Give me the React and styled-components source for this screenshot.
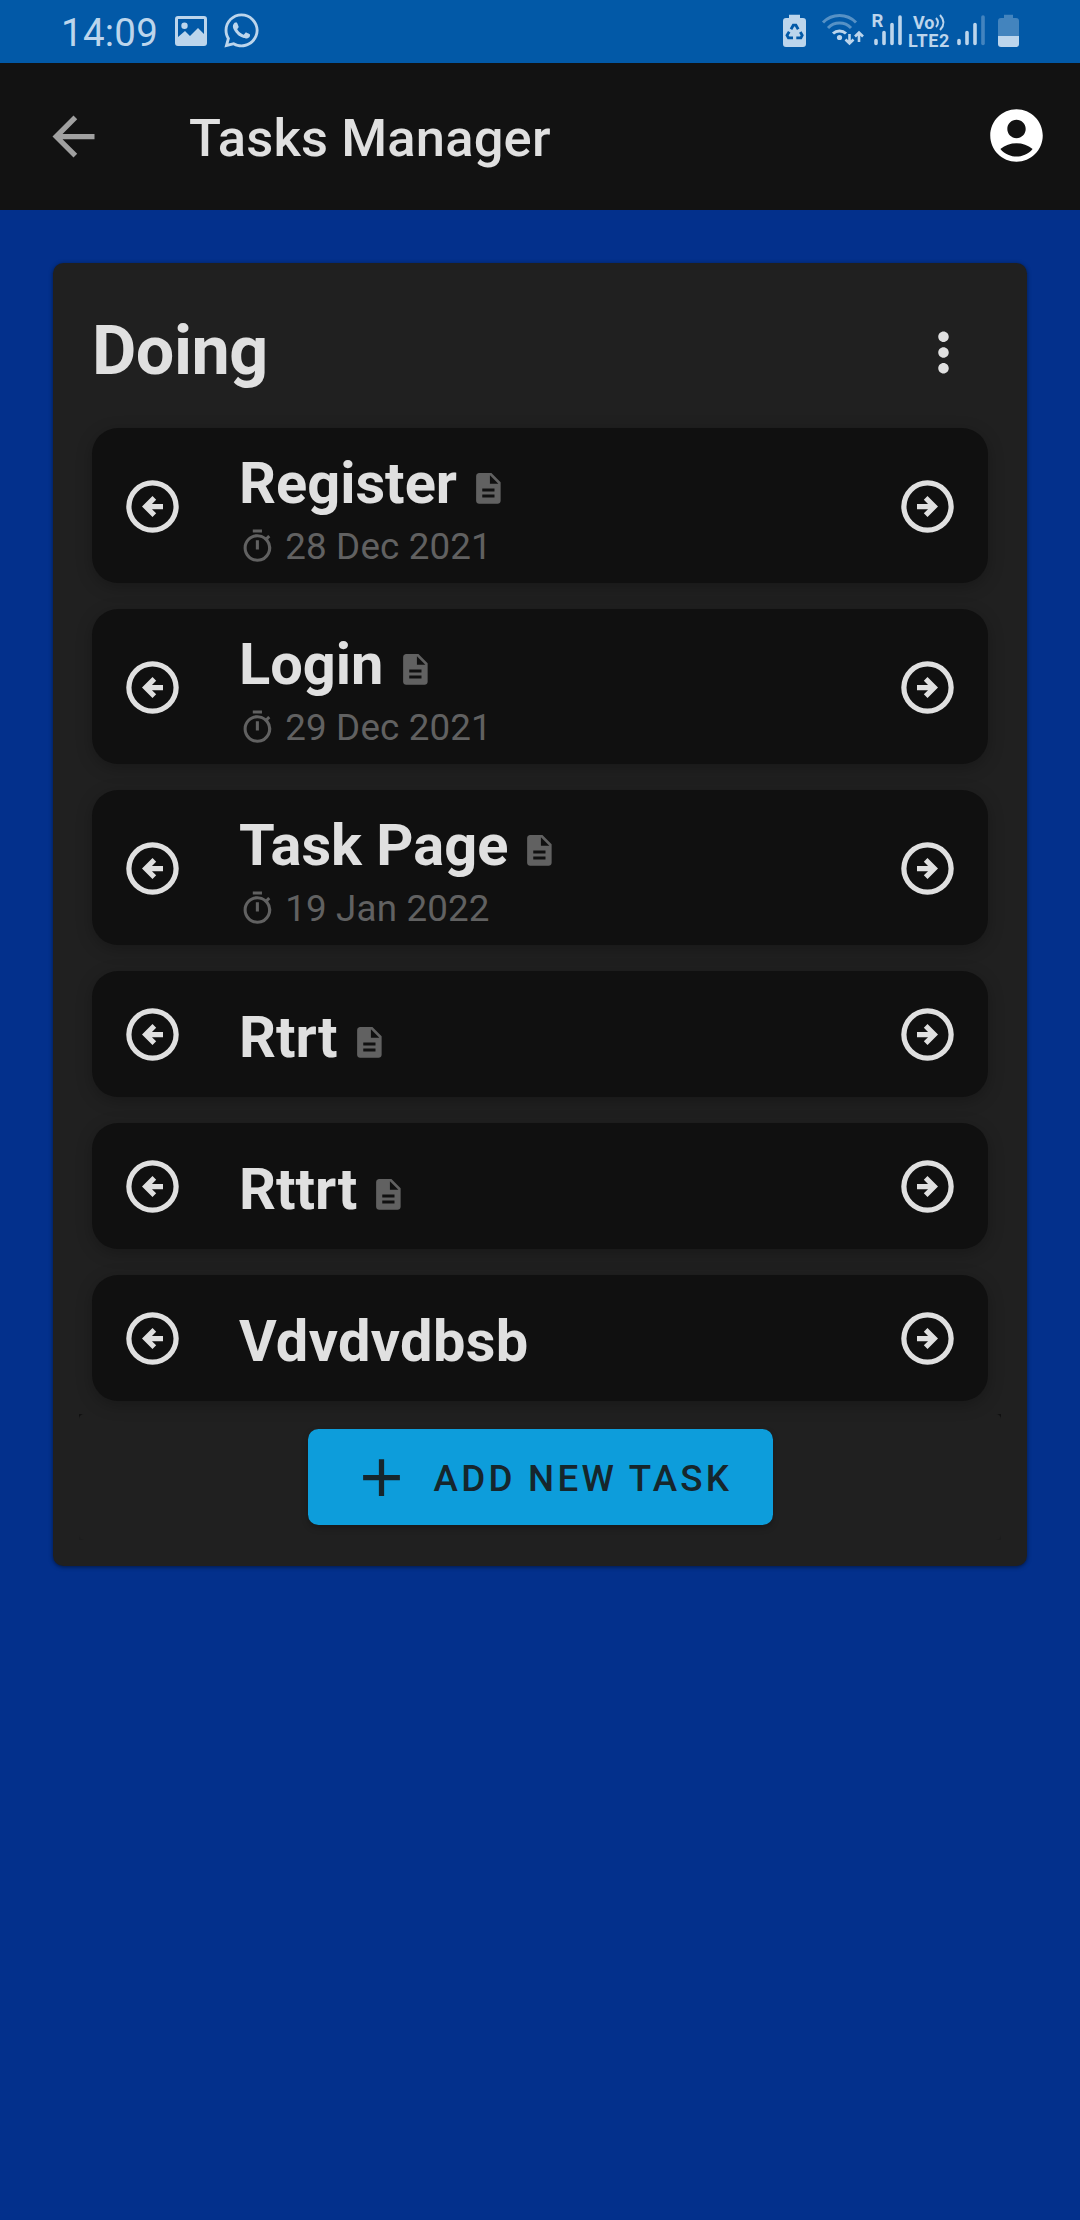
import React from "react";
import styled, { createGlobalStyle } from "styled-components";
import { MdDescription, MdOutlineTimer, MdAccountCircle, MdArrowBack, MdMoreVert, MdAdd } from "react-icons/md";
import { FaWhatsapp } from "react-icons/fa";

const GlobalStyle = createGlobalStyle`
  * { box-sizing: border-box; }
  body { margin: 0; background: #03308c; font-family: Roboto, sans-serif; }
`;

const Screen = styled.div`
  width: 1080px;
  height: 2220px;
  background: #03308c;
  overflow: hidden;
`;

const StatusBar = styled.header`
  display: flex;
  justify-content: space-between;
  height: 63px;
  padding: 0 61px 0 61px;
  background: #0259a7;
  color: #bcd5ec;
`;

const StatusGroup = styled.div`
  display: flex;
  align-items: flex-start;
`;

const Clock = styled.span`
  width: 114px;
  padding-top: 10px;
  font-size: 38.5px;
  line-height: 45px;
  letter-spacing: 0.25px;
`;

const StatusIcon = styled.svg`
  display: block;
  flex: none;
  width: ${(p) => p.$w}px;
  height: ${(p) => p.$h || 34}px;
  margin-left: ${(p) => p.$ml || 0}px;
  margin-top: ${(p) => p.$mt ?? 14}px;
  overflow: visible;
`;

const Network = styled.div`
  width: 41px;
  margin: 14px 0 0 6.5px;
  font-size: 18px;
  font-weight: 700;
  line-height: 17.5px;
  white-space: nowrap;
`;

const NetworkTop = styled.div`
  display: flex;
  height: 17.5px;
  padding-left: 5px;
`;

const NetworkBottom = styled.div`
  height: 17.5px;
  letter-spacing: 0.7px;
`;

const AppBar = styled.nav`
  display: flex;
  align-items: center;
  height: 147px;
  padding: 0 32px 0 42px;
  background: #121212;
`;

const BarTitle = styled.h1`
  flex: 1;
  margin: 2px 0 0 84px;
  color: #e0e0e0;
  font-size: 52.5px;
  font-weight: 500;
  line-height: 62px;
  letter-spacing: 0.16px;
`;

const AccountIcon = styled(MdAccountCircle)`
  width: 63px;
  height: 63px;
  margin-bottom: 2px;
  color: #fff;
`;

const Board = styled.main`
  padding: 53px;
`;

const Column = styled.section`
  height: 1303px;
  padding: 49px 26px 0;
  border-radius: 10.5px;
  background: #202020;
  box-shadow: 0 1px 4px rgba(0, 0, 0, 0.5);
`;

const ColumnHeader = styled.div`
  display: flex;
  justify-content: space-between;
  align-items: center;
  height: 80px;
  padding: 0 26px 0 13px;
`;

const ColumnTitle = styled.h2`
  margin: 0;
  padding-bottom: 2px;
  color: #e0e0e0;
  font-size: 68.25px;
  font-weight: 700;
  line-height: 80px;
  letter-spacing: -0.5px;
`;

const TaskList = styled.div`
  display: flex;
  flex-direction: column;
  gap: 26px;
  height: 1022px;
  padding: 36px 13px 0;
`;

const Task = styled.article`
  display: flex;
  align-items: center;
  flex: none;
  height: ${(p) => (p.$dated ? 155 : 126)}px;
  padding: 0 29px;
  border-radius: 26px;
  background: #101010;
  box-shadow: 0 4px 16px rgba(0, 0, 0, 0.25);
`;

const TaskBody = styled.div`
  flex: 1;
  margin-left: 55px;
  padding-top: ${(p) => (p.$dated ? 5 : 6)}px;
`;

const TaskTitle = styled.div`
  display: flex;
  align-items: flex-end;
  gap: 13px;
  height: 68px;
  color: #e0e0e0;
  font-size: 57.75px;
  font-weight: 700;
  line-height: 68px;
  letter-spacing: ${(p) => p.$tracking || 0}px;

  svg { color: #616161; margin-bottom: 10px; }
`;

const TaskDate = styled.div`
  display: flex;
  align-items: center;
  gap: 9.5px;
  height: 43px;
  margin-top: 8px;
  color: #616161;
  font-size: 36.75px;
  line-height: 43px;
  letter-spacing: 0.15px;
`;

const Footer = styled.div`
  height: 126px;
  background: linear-gradient(#101010, #1d1d1d);
`;

const FooterSurface = styled.div`
  display: flex;
  justify-content: center;
  height: 126px;
  padding-top: 15px;
  border-radius: 5px;
  background: #202020;
`;

const AddButton = styled.button`
  display: flex;
  align-items: center;
  gap: 21px;
  width: 465px;
  height: 96px;
  padding: 0 0 0 42px;
  border: 0;
  border-radius: 10.5px;
  background: #0d9ddb;
  box-shadow: 0 3px 6px rgba(0, 0, 0, 0.25);
  color: #16262c;
  font-family: inherit;
  font-size: 36.75px;
  font-weight: 500;
  letter-spacing: 3.28px;
  white-space: nowrap;
`;

const AddLabel = styled.span`
  padding-top: 2px;
`;

const ArrowSvg = styled.svg`
  flex: none;
  width: 63px;
  height: 63px;
  margin-top: 1px;
  fill: #e0e0e0;
  transform: ${(p) => (p.$right ? "scaleX(-1)" : "none")};
`;

const CircleArrow = ({ right }) => (
  <ArrowSvg viewBox="0 0 24 24" $right={right}>
    <path fillRule="evenodd" d="M12 2a10 10 0 1 0 0 20 10 10 0 0 0 0-20zm0 2a8 8 0 1 1 0 16 8 8 0 0 1 0-16z" />
    <path d="M16 11h-4.200l1.600-1.600L12 8l-4 4 4 4 1.400-1.400-1.600-1.600H16z" />
  </ArrowSvg>
);

const tasks = [
  { title: "Register", date: "28 Dec 2021", note: true },
  { title: "Login", date: "29 Dec 2021", note: true },
  { title: "Task Page", date: "19 Jan 2022", note: true },
  { title: "Rtrt", note: true },
  { title: "Rttrt", note: true },
  { title: "Vdvdvdbsb", tracking: 0.35 },
];

const SignalBars = ({ roaming, dim }) => (
  <StatusIcon $w={28} $h={34} $ml={roaming ? 9 : 8} viewBox="0 0 28 34">
    {roaming && (
      <text x="-2.5" y="13" fontSize="18.5" fontWeight="700" fill="currentColor">R</text>
    )}
    <g stroke="currentColor" strokeWidth="3.6" strokeLinecap="round">
      <path d="M2 26.500v3M10 18.500v11M18 10.500v19" />
      <path d="M26 3v26.500" opacity={dim ? 0.35 : 1} />
    </g>
  </StatusIcon>
);

export default function App() {
  return (
    <Screen>
      <GlobalStyle />
      <StatusBar>
        <StatusGroup>
          <Clock>14:09</Clock>
          <StatusIcon $w={32} $h={30} $mt={15.5} viewBox="0 0 32 30" fill="currentColor">
            <path fillRule="evenodd" d="M3 0h26a3 3 0 0 1 3 3v24a3 3 0 0 1-3 3H3a3 3 0 0 1-3-3V3a3 3 0 0 1 3-3zm0 3v18l7-6 5 5 8-8 6 6V3zM9.500 6.500a3.200 3.200 0 1 1 0 6.400 3.200 3.200 0 0 1 0-6.400z" />
          </StatusIcon>
          <StatusIcon as={FaWhatsapp} $w={39} $h={39} $ml={15} $mt={11} />
        </StatusGroup>
        <StatusGroup>
          <StatusIcon $w={23} $h={33} viewBox="0 0 23 33" fill="currentColor">
            <path d="M6 4V.7h11V4h3a3 3 0 0 1 3 3v23a3 3 0 0 1-3 3H3a3 3 0 0 1-3-3V7a3 3 0 0 1 3-3z" />
            <g fill="none" stroke="#0259a7" strokeWidth="2.8">
              <path d="M8 15.300 10.300 11.200h2.600l2.300 4.100M17.300 18l1.900 3.300-1.300 2.500H13.300M10 23.800H5.400l-1.400-2.500 2.200-3.600" />
            </g>
          </StatusIcon>
          <StatusIcon $w={43} $h={34} $ml={16} viewBox="0 0 43 34">
            <g fill="none" stroke="currentColor" strokeWidth="3">
              <path d="M1 8.500a23 23 0 0 1 33 0M6 14a16 16 0 0 1 23 0" opacity=".45" />
              <path d="M11 19.500a9.500 9.500 0 0 1 13 0" />
              <path d="M27.500 20v9M23.500 25.500l4 4 4-4M37 28v-9M33 22.500l4-4 4 4" strokeWidth="2.6" />
            </g>
            <circle cx="17.5" cy="23.500" r="2.6" fill="currentColor" />
          </StatusIcon>
          <SignalBars roaming />
          <Network>
            <NetworkTop>
              Vo
              <StatusIcon $w={10} $h={17} $mt={0} viewBox="0 0 10 17" fill="none" stroke="currentColor" strokeWidth="2">
                <path d="M1 4q4 4.500 0 9M5 1q7 7.500 0 15" />
              </StatusIcon>
            </NetworkTop>
            <NetworkBottom>LTE2</NetworkBottom>
          </Network>
          <SignalBars dim />
          <StatusIcon $w={21} $h={33} $ml={13} viewBox="0 0 21 33" fill="currentColor">
            <path d="M6 4V.7h9V4h3a3 3 0 0 1 3 3v15H0V7a3 3 0 0 1 3-3z" opacity=".35" />
            <path d="M0 22h21v8a3 3 0 0 1-3 3H3a3 3 0 0 1-3-3z" />
          </StatusIcon>
        </StatusGroup>
      </StatusBar>

      <AppBar>
        <MdArrowBack size={63} color="#a0a0a0" />
        <BarTitle>Tasks Manager</BarTitle>
        <AccountIcon />
      </AppBar>

      <Board>
        <Column>
          <ColumnHeader>
            <ColumnTitle>Doing</ColumnTitle>
            <MdMoreVert size={63} color="#e0e0e0" />
          </ColumnHeader>
          <TaskList>
            {tasks.map((t) => (
              <Task key={t.title} $dated={!!t.date}>
                <CircleArrow />
                <TaskBody $dated={!!t.date}>
                  <TaskTitle $tracking={t.tracking}>
                    {t.title}
                    {t.note && <MdDescription size={36.75} />}
                  </TaskTitle>
                  {t.date && (
                    <TaskDate>
                      <MdOutlineTimer size={36.75} />
                      {t.date}
                    </TaskDate>
                  )}
                </TaskBody>
                <CircleArrow right />
              </Task>
            ))}
          </TaskList>
          <Footer>
            <FooterSurface>
              <AddButton>
                <MdAdd size={63} />
                <AddLabel>ADD NEW TASK</AddLabel>
              </AddButton>
            </FooterSurface>
          </Footer>
        </Column>
      </Board>
    </Screen>
  );
}
